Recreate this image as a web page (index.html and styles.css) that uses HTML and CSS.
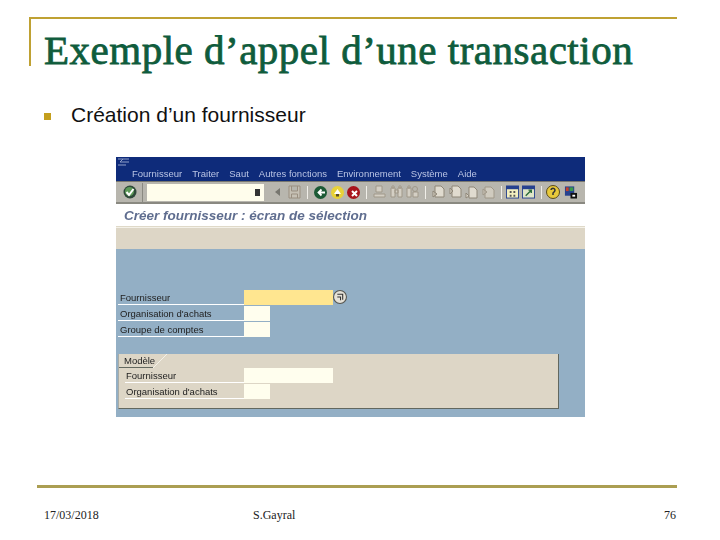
FILE: index.html
```html
<!DOCTYPE html>
<html lang="fr">
<head>
    <meta charset="UTF-8">
    <title>Exemple d’appel d’une transaction</title>
    <link rel="stylesheet" href="styles.css">
</head>
<body>
    <div class="slide">
        <div class="title-box">
            <h1>Exemple d’appel d’une transaction</h1>
        </div>

        <div class="bullet">
            <span class="bullet-mark"></span>
            <span>Création d’un fournisseur</span>
        </div>

        <div class="sap">
            <div class="menu-bar">
                <svg class="sap-logo" width="14" height="9" viewBox="0 0 14 9"><path d="M1 1h11M6 1L3 4h9M1 7h8" fill="none" stroke="#8f9fc8" stroke-width="1"/></svg>
                <div class="menu-items">
                    <span>Fournisseur</span>
                    <span>Traiter</span>
                    <span>Saut</span>
                    <span>Autres fonctions</span>
                    <span>Environnement</span>
                    <span>Système</span>
                    <span>Aide</span>
                </div>
            </div>

            <div class="toolbar">
                <span class="tool">
                    <svg width="14" height="14" viewBox="0 0 14 14"><circle cx="7" cy="7" r="6.500" fill="#2f4a3a"/><circle cx="6.500" cy="6.500" r="4.500" fill="#5d9a58"/><path d="M3.500 7l2.500 3 4.500-6" fill="none" stroke="#fff" stroke-width="2"/></svg>
                </span>
                <span class="command">
                    <span class="command-arrow"></span>
                </span>
                <span class="back-arrow"></span>
                <svg width="13" height="14" viewBox="0 0 13 14"><path d="M1 1h11v12H1zM3.500 1v5h6V1M3.500 13V9h6v4" fill="#c6c0b4" stroke="#9a8f80"/></svg>
                <span class="sep"></span>
                <svg width="13" height="13" viewBox="0 0 13 13"><circle cx="6.500" cy="6.500" r="6.500" fill="#1c5a35"/><path d="M11 6.500H5M7.500 3.500l-3 3 3 3" fill="none" stroke="#fff" stroke-width="1.800"/></svg>
                <svg width="13" height="13" viewBox="0 0 13 13"><circle cx="6.500" cy="6.500" r="6.500" fill="#e8d238"/><path d="M6.500 3L3 8h7z" fill="#fff"/><path d="M5 8v2.500h3V8" fill="#5a4a2a"/></svg>
                <svg width="13" height="13" viewBox="0 0 13 13"><circle cx="6.500" cy="6.500" r="6.500" fill="#a8141c"/><path d="M5 5l5 5M10 5l-5 5" stroke="#fff" stroke-width="2"/></svg>
                <span class="sep"></span>
                <svg width="13" height="14" viewBox="0 0 13 14"><path d="M3 1h6v6H3zM1 9h11v3H1z" fill="#d4cfc4" stroke="#a09889"/></svg>
                <svg width="13" height="14" viewBox="0 0 13 14"><path d="M1 3h4v9H1zM8 3h4v9H8zM2 1h2v2H2zM9 1h2v2H9zM5 5h3v3H5z" fill="#d4cfc4" stroke="#a09889"/></svg>
                <svg width="13" height="14" viewBox="0 0 13 14"><path d="M1 3h4v9H1zM7 7h5v5H7zM2 1h2v2H2z" fill="#d4cfc4" stroke="#a09889"/><circle cx="9" cy="4" r="2.500" fill="none" stroke="#a09889"/></svg>
                <span class="sep"></span>
                <svg width="13" height="14" viewBox="0 0 13 14"><path d="M3 1h6l3 3v8H3zM1 6l4 3-4 3z" fill="#e0dbcf" stroke="#8f8778"/></svg>
                <svg width="13" height="14" viewBox="0 0 13 14"><path d="M3 1h6l3 3v8H3zM1 3l3 3-3 3z" fill="#e0dbcf" stroke="#8f8778"/></svg>
                <svg width="13" height="14" viewBox="0 0 13 14"><path d="M4 2h5l3 3v8H4zM1 8l3 3-3 2z" fill="#e0dbcf" stroke="#8f8778"/></svg>
                <svg width="13" height="14" viewBox="0 0 13 14"><path d="M3 2h6l3 3v8H3zM1 4l4 3-4 3z" fill="#d0cbbf" stroke="#a09889"/></svg>
                <span class="sep sep-tight"></span>
                <svg width="13" height="14" viewBox="0 0 14 14"><path d="M0 0h14v14H0z" fill="#26418f"/><path d="M1 4h12v9H1z" fill="#f3efc0"/><path d="M4 6h2v2H4zM8 6h2v2H8zM4 10h2v2H4zM8 10h2v2H8z" fill="#555"/></svg>
                <svg width="13" height="14" viewBox="0 0 14 14"><path d="M0 0h14v14H0z" fill="#26418f"/><path d="M1 4h12v9H1z" fill="#dfe6c8"/><path d="M4 11l6-6M7 5h3v3" fill="none" stroke="#2a6a3a" stroke-width="1.500"/></svg>
                <span class="sep sep-tight"></span>
                <svg width="14" height="14" viewBox="0 0 14 14"><circle cx="7" cy="7" r="6.500" fill="#e8c93a" stroke="#5a4a1a"/><path d="M5 5a2 2 0 1 1 3 2l-1 1v2" fill="none" stroke="#333" stroke-width="1.500"/></svg>
                <svg width="13" height="14" viewBox="0 0 14 14"><path d="M1 1h10v10H1z" fill="#26418f"/><path d="M2 2h3v4H2z" fill="#c8402a"/><path d="M6 2h4v4H6z" fill="#3a9a4a"/><path d="M7 8h7v6H7z" fill="#111"/><path d="M9 10h3v2H9z" fill="#fff"/></svg>
            </div>

            <div class="screen-title">Créer fournisseur : écran de sélection</div>
            <div class="app-bar"></div>

            <div class="work-area">
                <div class="form-row">
                    <span class="form-label">Fournisseur</span>
                    <span class="input input-wide input-required"></span>
                    <svg width="14" height="14" viewBox="0 0 13 13"><circle cx="6.500" cy="6.500" r="6" fill="#e6e2d8" stroke="#55554f"/><path d="M4 4h5v5M4 6.500h3v3" fill="none" stroke="#333"/></svg>
                </div>
                <div class="form-row">
                    <span class="form-label">Organisation d'achats</span>
                    <span class="input input-small"></span>
                </div>
                <div class="form-row">
                    <span class="form-label">Groupe de comptes</span>
                    <span class="input input-small"></span>
                </div>

                <div class="group">
                    <div class="group-head">
                        <div class="group-tab">Modèle</div>
                        <svg width="14" height="14" viewBox="0 0 14 14"><path d="M0 14L14 0" stroke="#f4f1e8"/></svg>
                    </div>
                    <div class="form-row group-row">
                        <span class="form-label">Fournisseur</span>
                        <span class="input input-wide"></span>
                    </div>
                    <div class="form-row group-row">
                        <span class="form-label">Organisation d'achats</span>
                        <span class="input input-small"></span>
                    </div>
                </div>
            </div>
        </div>

        <div class="footer">
            <span class="footer-date">17/03/2018</span>
            <span class="footer-author">S.Gayral</span>
            <span class="footer-page">76</span>
        </div>
    </div>
</body>
</html>
```

FILE: styles.css
```css
* {
    margin: 0;
    padding: 0;
    box-sizing: border-box;
}

body {
    width: 720px;
    height: 540px;
    background: #fff;
    overflow: hidden;
}

.slide {
    height: 540px;
    padding: 17px 43px 0 29px;
    display: flex;
    flex-direction: column;
}

.title-box {
    height: 49px;
    border-top: 2px solid #bfa133;
    border-left: 2px solid #bfa133;
    padding-left: 13px;
}

h1 {
    font-family: "Liberation Serif", serif;
    font-size: 41px;
    font-weight: normal;
    line-height: 62px;
    height: 47px;
    letter-spacing: 0.5px;
    color: #0f5c3c;
    white-space: nowrap;
    -webkit-text-stroke: 0.8px #0f5c3c;
}

.bullet {
    display: flex;
    align-items: center;
    margin-top: 38px;
    height: 22px;
    padding-left: 15px;
    font-family: "Liberation Sans", sans-serif;
    font-size: 21px;
    color: #111;
}

.bullet-mark {
    width: 7px;
    height: 7px;
    background: #c49f1d;
    margin-right: 20px;
    margin-top: 2px;
}

.sap {
    width: 469px;
    height: 260px;
    margin: 31px 0 0 87px;
    background: #fff;
    font-family: "Liberation Sans", sans-serif;
    display: flex;
    flex-direction: column;
    filter: blur(0.3px);
}

.menu-bar {
    height: 24px;
    background: #0e2b7a;
    padding: 1px 0 0 1px;
}

.sap-logo {
    display: block;
}

.menu-items {
    display: flex;
    gap: 10px;
    padding: 1px 0 0 15px;
    font-size: 9.5px;
    line-height: 11px;
    color: #b9c4e4;
}

.toolbar {
    height: 23px;
    background: #b8b6ae;
    border-top: 1px solid #77766f;
    border-bottom: 2px solid #8a8981;
    display: flex;
    align-items: center;
    gap: 3.5px;
    padding-left: 7px;
}

.toolbar svg {
    flex: none;
}

.tool {
    display: flex;
    align-items: center;
    height: 19px;
    padding-right: 5px;
    border-right: 1px solid #8a8981;
}

.command {
    width: 117px;
    height: 17px;
    margin-left: 0.5px;
    background: #fffdec;
    display: flex;
    align-items: center;
    justify-content: flex-end;
    padding-right: 4px;
}

.command-arrow {
    width: 5px;
    height: 7px;
    background: #333;
}

.back-arrow {
    width: 0;
    height: 0;
    border-top: 4px solid transparent;
    border-bottom: 4px solid transparent;
    border-right: 5px solid #77766f;
    margin-left: 7px;
    margin-right: 5px;
}

.sep {
    width: 1px;
    height: 13px;
    background: #f0eee8;
    margin: 0 2.5px;
}

.sep-tight {
    margin-right: 0.5px;
}

.screen-title {
    height: 23px;
    padding: 4px 0 0 8px;
    font-size: 13.5px;
    line-height: 15px;
    font-weight: bold;
    font-style: italic;
    color: #5f6d8f;
    border-bottom: 1px solid #dfd9c8;
}

.app-bar {
    height: 22px;
    background: #ddd6c6;
    border-top: 1px solid #f4f1e8;
}

.work-area {
    flex: 1;
    background: #93afc5;
    padding: 41px 0 0 2px;
}

.form-row {
    display: flex;
    height: 16px;
}

.form-label {
    width: 126px;
    height: 15px;
    border-bottom: 1px solid #fff;
    font-size: 9.5px;
    line-height: 15px;
    padding-left: 2px;
    color: #222;
}

.input {
    height: 15px;
    background: #fffeee;
}

.input-wide {
    width: 89px;
}

.input-small {
    width: 26px;
}

.input-required {
    background: #ffe690;
}

.group {
    width: 441px;
    height: 55px;
    margin-top: 16px;
    background: #ddd6c6;
    border-left: 1px solid #a9aca6;
    border-right: 1px solid #62685f;
    border-bottom: 1px solid #62685f;
}

.group-head {
    display: flex;
    height: 14px;
}

.group-tab {
    width: 34px;
    border-bottom: 1px solid #62685f;
    font-size: 9.5px;
    line-height: 14px;
    padding-left: 5px;
    color: #222;
}

.group-row {
    padding-left: 6px;
}

.group-row .form-label {
    width: 119px;
    padding-left: 1px;
}

.footer {
    margin: 68px 0 0 8px;
    border-top: 3px solid #ab9e52;
    height: 40px;
    padding: 21px 0 0 7px;
    font-family: "Liberation Serif", serif;
    font-size: 12px;
    line-height: 13px;
    color: #222;
    display: flex;
}

.footer-date {
    width: 209px;
}

.footer-author {
    flex: 1;
}

.footer-page {
    padding-right: 1px;
}
```
